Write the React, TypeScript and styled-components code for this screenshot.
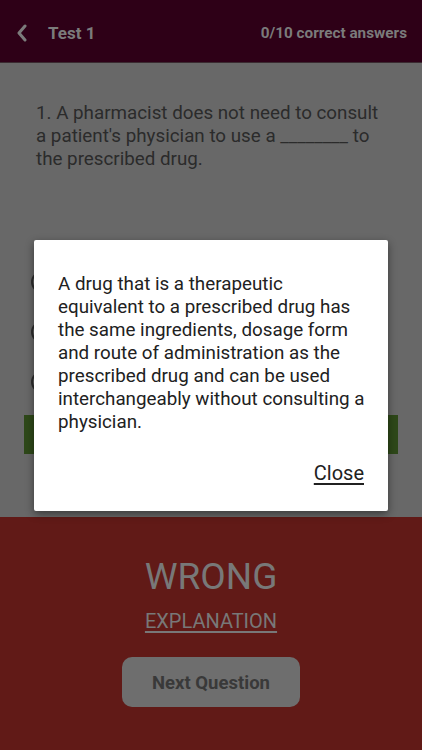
import React from "react";
import styled, { createGlobalStyle } from "styled-components";

const Global = createGlobalStyle`
  html, body { margin: 0; padding: 0; }
  body { font-family: Roboto, "Noto Sans", sans-serif; background: #686868; }
  * { box-sizing: border-box; }
`;

const Page = styled.div`
  width: 422px;
  height: 750px;
  display: flex;
  flex-direction: column;
  overflow: hidden;
  position: relative;
`;

const Header = styled.header`
  height: 63px;
  background: #2e0017;
  display: flex;
  align-items: center;
  padding: 4px 15px 0 16px;
  border-bottom: 1px solid #3a2a30;
`;

const BackButton = styled.span`
  display: flex;
  align-items: center;
  width: 32px;
  color: #7b7b7b;
`;

const Title = styled.span`
  font-size: 17px;
  font-weight: 700;
  color: #7b7b7b;
  flex: 1;
`;

const Score = styled.span`
  font-size: 15.3px;
  font-weight: 700;
  color: #7b7b7b;
`;

const Content = styled.main`
  flex: 1;
  background: #686868;
  padding: 39px 24px 0 24px;
  display: flex;
  flex-direction: column;
`;

const Question = styled.p`
  margin: 0 16px 0 12px;
  font-size: 18.8px;
  line-height: 23px;
  color: #2b2b2b;
  height: 169px;
`;

const Options = styled.div`
  display: flex;
  flex-direction: column;
  gap: 28px;
  padding-left: 7px;
`;

const Option = styled.div`
  display: flex;
  align-items: center;
  height: 22px;
`;

const Radio = styled.span`
  width: 22px;
  height: 22px;
  border-radius: 50%;
  border: 2px solid #2e2e2e;
`;

const AnswerBar = styled.div`
  margin-top: 22px;
  height: 39px;
  background: #2e4819;
`;

const Result = styled.section`
  height: 233px;
  background: #611a17;
  display: flex;
  flex-direction: column;
  align-items: center;
  padding-top: 38px;
`;

const Verdict = styled.div`
  font-size: 37px;
  line-height: 44px;
  color: #787878;
`;

const Explanation = styled.div`
  margin-top: 10px;
  font-size: 20px;
  line-height: 24px;
  color: #787878;
  text-decoration: underline;
  text-underline-offset: 3px;
`;

const NextButton = styled.button`
  margin-top: 24px;
  width: 178px;
  height: 50px;
  border: none;
  border-radius: 10px;
  background: #6e6e6e;
  color: #393939;
  font-family: Roboto, sans-serif;
  font-size: 18.5px;
  font-weight: 700;
  padding-top: 3px;
`;

const Backdrop = styled.div`
  position: absolute;
  inset: 0;
  display: flex;
  align-items: center;
  justify-content: center;
`;

const Dialog = styled.div`
  width: 354px;
  height: 271px;
  background: #ffffff;
  border-radius: 2px;
  box-shadow: 0 3px 8px rgba(0, 0, 0, 0.45);
  padding: 33px 22px 0 24px;
  display: flex;
  flex-direction: column;
`;

const DialogText = styled.p`
  margin: 0;
  font-size: 18.8px;
  line-height: 23px;
  color: #212121;
`;

const CloseLink = styled.span`
  align-self: flex-end;
  margin-top: 27px;
  margin-right: 2px;
  font-size: 20px;
  line-height: 24px;
  color: #212121;
  text-decoration: underline;
  text-underline-offset: 3px;
`;

export default function App() {
  return (
    <>
      <Global />
      <Page>
        <Header>
          <BackButton>
            <svg width="12" height="18" viewBox="0 0 12 18">
              <path d="M9 2 L3 9 L9 16" fill="none" stroke="#7b7b7b" strokeWidth="3" strokeLinecap="round" strokeLinejoin="round" />
            </svg>
          </BackButton>
          <Title>Test 1</Title>
          <Score>0/10 correct answers</Score>
        </Header>
        <Content>
          <Question>
            1. A pharmacist does not need to consult a patient's physician to use a ________ to the prescribed drug.
          </Question>
          <Options>
            <Option><Radio /></Option>
            <Option><Radio /></Option>
            <Option><Radio /></Option>
          </Options>
          <AnswerBar />
        </Content>
        <Result>
          <Verdict>WRONG</Verdict>
          <Explanation>EXPLANATION</Explanation>
          <NextButton>Next Question</NextButton>
        </Result>
        <Backdrop>
          <Dialog>
            <DialogText>
              A drug that is a therapeutic equivalent to a prescribed drug has the same ingredients, dosage form and route of administration as the prescribed drug and can be used interchangeably without consulting a physician.
            </DialogText>
            <CloseLink>Close</CloseLink>
          </Dialog>
        </Backdrop>
      </Page>
    </>
  );
}
